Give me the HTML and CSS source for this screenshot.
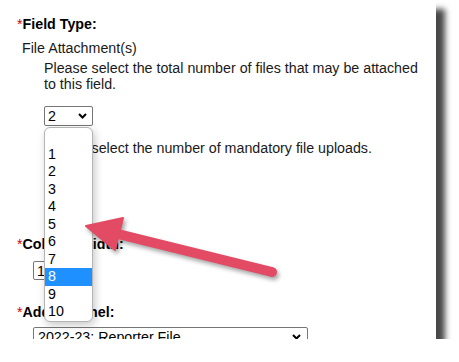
FILE: index.html
```html
<!DOCTYPE html>
<html>
<head>
<meta charset="utf-8">
<link rel="stylesheet" href="styles.css">
</head>
<body>
<div class="panel">
  <div class="form">
    <div class="label"><span class="req">*</span>Field Type:</div>
    <div class="value">File Attachment(s)</div>
    <p class="help help-first">Please select the total number of files that may be attached to this field.</p>
    <div class="select sel-count">
      <span>2</span>
      <svg class="chev" width="9" height="6" viewBox="0 0 9 6"><path d="M1 1 L4.5 4.5 L8 1" fill="none" stroke="#000" stroke-width="2"/></svg>
    </div>
    <p class="help help-second">Please select the number of mandatory file uploads.</p>
    <div class="select sel-mand">
      <span>0</span>
      <svg class="chev" width="9" height="6" viewBox="0 0 9 6"><path d="M1 1 L4.5 4.5 L8 1" fill="none" stroke="#000" stroke-width="2"/></svg>
    </div>
    <div class="label label-col"><span class="req">*</span>Column Width:</div>
    <div class="select sel-width">
      <span>1</span>
      <svg class="chev" width="9" height="6" viewBox="0 0 9 6"><path d="M1 1 L4.5 4.5 L8 1" fill="none" stroke="#000" stroke-width="2"/></svg>
    </div>
    <div class="label label-panel"><span class="req">*</span>Add to Panel:</div>
    <div class="select sel-panel">
      <span>2022-23: Reporter File</span>
      <svg class="chev" width="9" height="6" viewBox="0 0 9 6"><path d="M1 1 L4.5 4.5 L8 1" fill="none" stroke="#000" stroke-width="2"/></svg>
    </div>
  </div>

  <ul class="popup">
    <li class="opt">&nbsp;</li>
    <li class="opt">1</li>
    <li class="opt">2</li>
    <li class="opt">3</li>
    <li class="opt">4</li>
    <li class="opt">5</li>
    <li class="opt">6</li>
    <li class="opt">7</li>
    <li class="opt active">8</li>
    <li class="opt">9</li>
    <li class="opt">10</li>
  </ul>

  <svg class="arrow" width="436" height="339" viewBox="0 0 436 339">
    <line x1="116" y1="233.5" x2="272" y2="272" stroke="#e24b63" stroke-width="10" stroke-linecap="round"/>
    <polygon points="86,226 123,218 115,250" fill="#e24b63" stroke="#e24b63" stroke-width="2" stroke-linejoin="round"/>
  </svg>
</div>
</body>
</html>
```

FILE: styles.css
```css
html, body {
  margin: 0;
  padding: 0;
  background: #ffffff;
}

.panel {
  position: relative;
  width: 436px;
  height: 339px;
  background: #ffffff;
  overflow: hidden;
  box-shadow: 9px 9px 6px rgba(0, 0, 0, 0.72);
  font-family: "Liberation Sans", Arial, sans-serif;
  font-size: 14.25px;
  line-height: 16px;
  color: #1a1a1a;
}

.form {
  padding: 16px 0 0 17px;
  display: flex;
  flex-direction: column;
  align-items: flex-start;
}

.label {
  font-weight: bold;
  color: #000;
}

.req {
  color: #d40000;
  font-weight: normal;
}

.value {
  margin: 8px 0 0 5px;
}

.help {
  margin: 0 0 0 27px;
  width: 378px;
}

.help-first {
  margin-top: 4px;
}

.help-second {
  margin-top: 14px;
}

.select {
  box-sizing: border-box;
  height: 20px;
  display: flex;
  align-items: center;
  justify-content: space-between;
  border: 1px solid #767676;
  border-radius: 2px;
  padding: 0 5px 0 3px;
  background: #fff;
  color: #000;
}

.chev {
  flex: none;
}

.sel-count {
  margin: 14px 0 0 27px;
  width: 49px;
}

.sel-mand {
  margin: 8px 0 0 27px;
  width: 49px;
}

.label-col {
  margin-top: 52px;
}

.sel-width {
  margin: 9px 0 0 16px;
  width: 54px;
  height: 19px;
}

.label-panel {
  margin-top: 24px;
}

.sel-panel {
  margin: 7px 0 0 16px;
  width: 275px;
  padding-left: 4px;
  padding-right: 6px;
}

.popup {
  position: absolute;
  left: 44px;
  top: 127px;
  width: 49px;
  box-sizing: border-box;
  margin: 0;
  padding: 0;
  list-style: none;
  background: #fff;
  border: 1px solid #b4b4b4;
  border-radius: 6px;
  box-shadow: 2px 3px 9px rgba(0, 0, 0, 0.22);
  overflow: hidden;
  z-index: 2;
}

.opt {
  height: 17.5px;
  line-height: 17.5px;
  padding-left: 3px;
  font-size: 14.25px;
  color: #000;
}

.opt.active {
  background: #1e90ff;
  color: #fff;
}

.arrow {
  position: absolute;
  left: 0;
  top: 0;
  z-index: 3;
  filter: drop-shadow(2px 3px 2px rgba(0, 0, 0, 0.35));
}
```
